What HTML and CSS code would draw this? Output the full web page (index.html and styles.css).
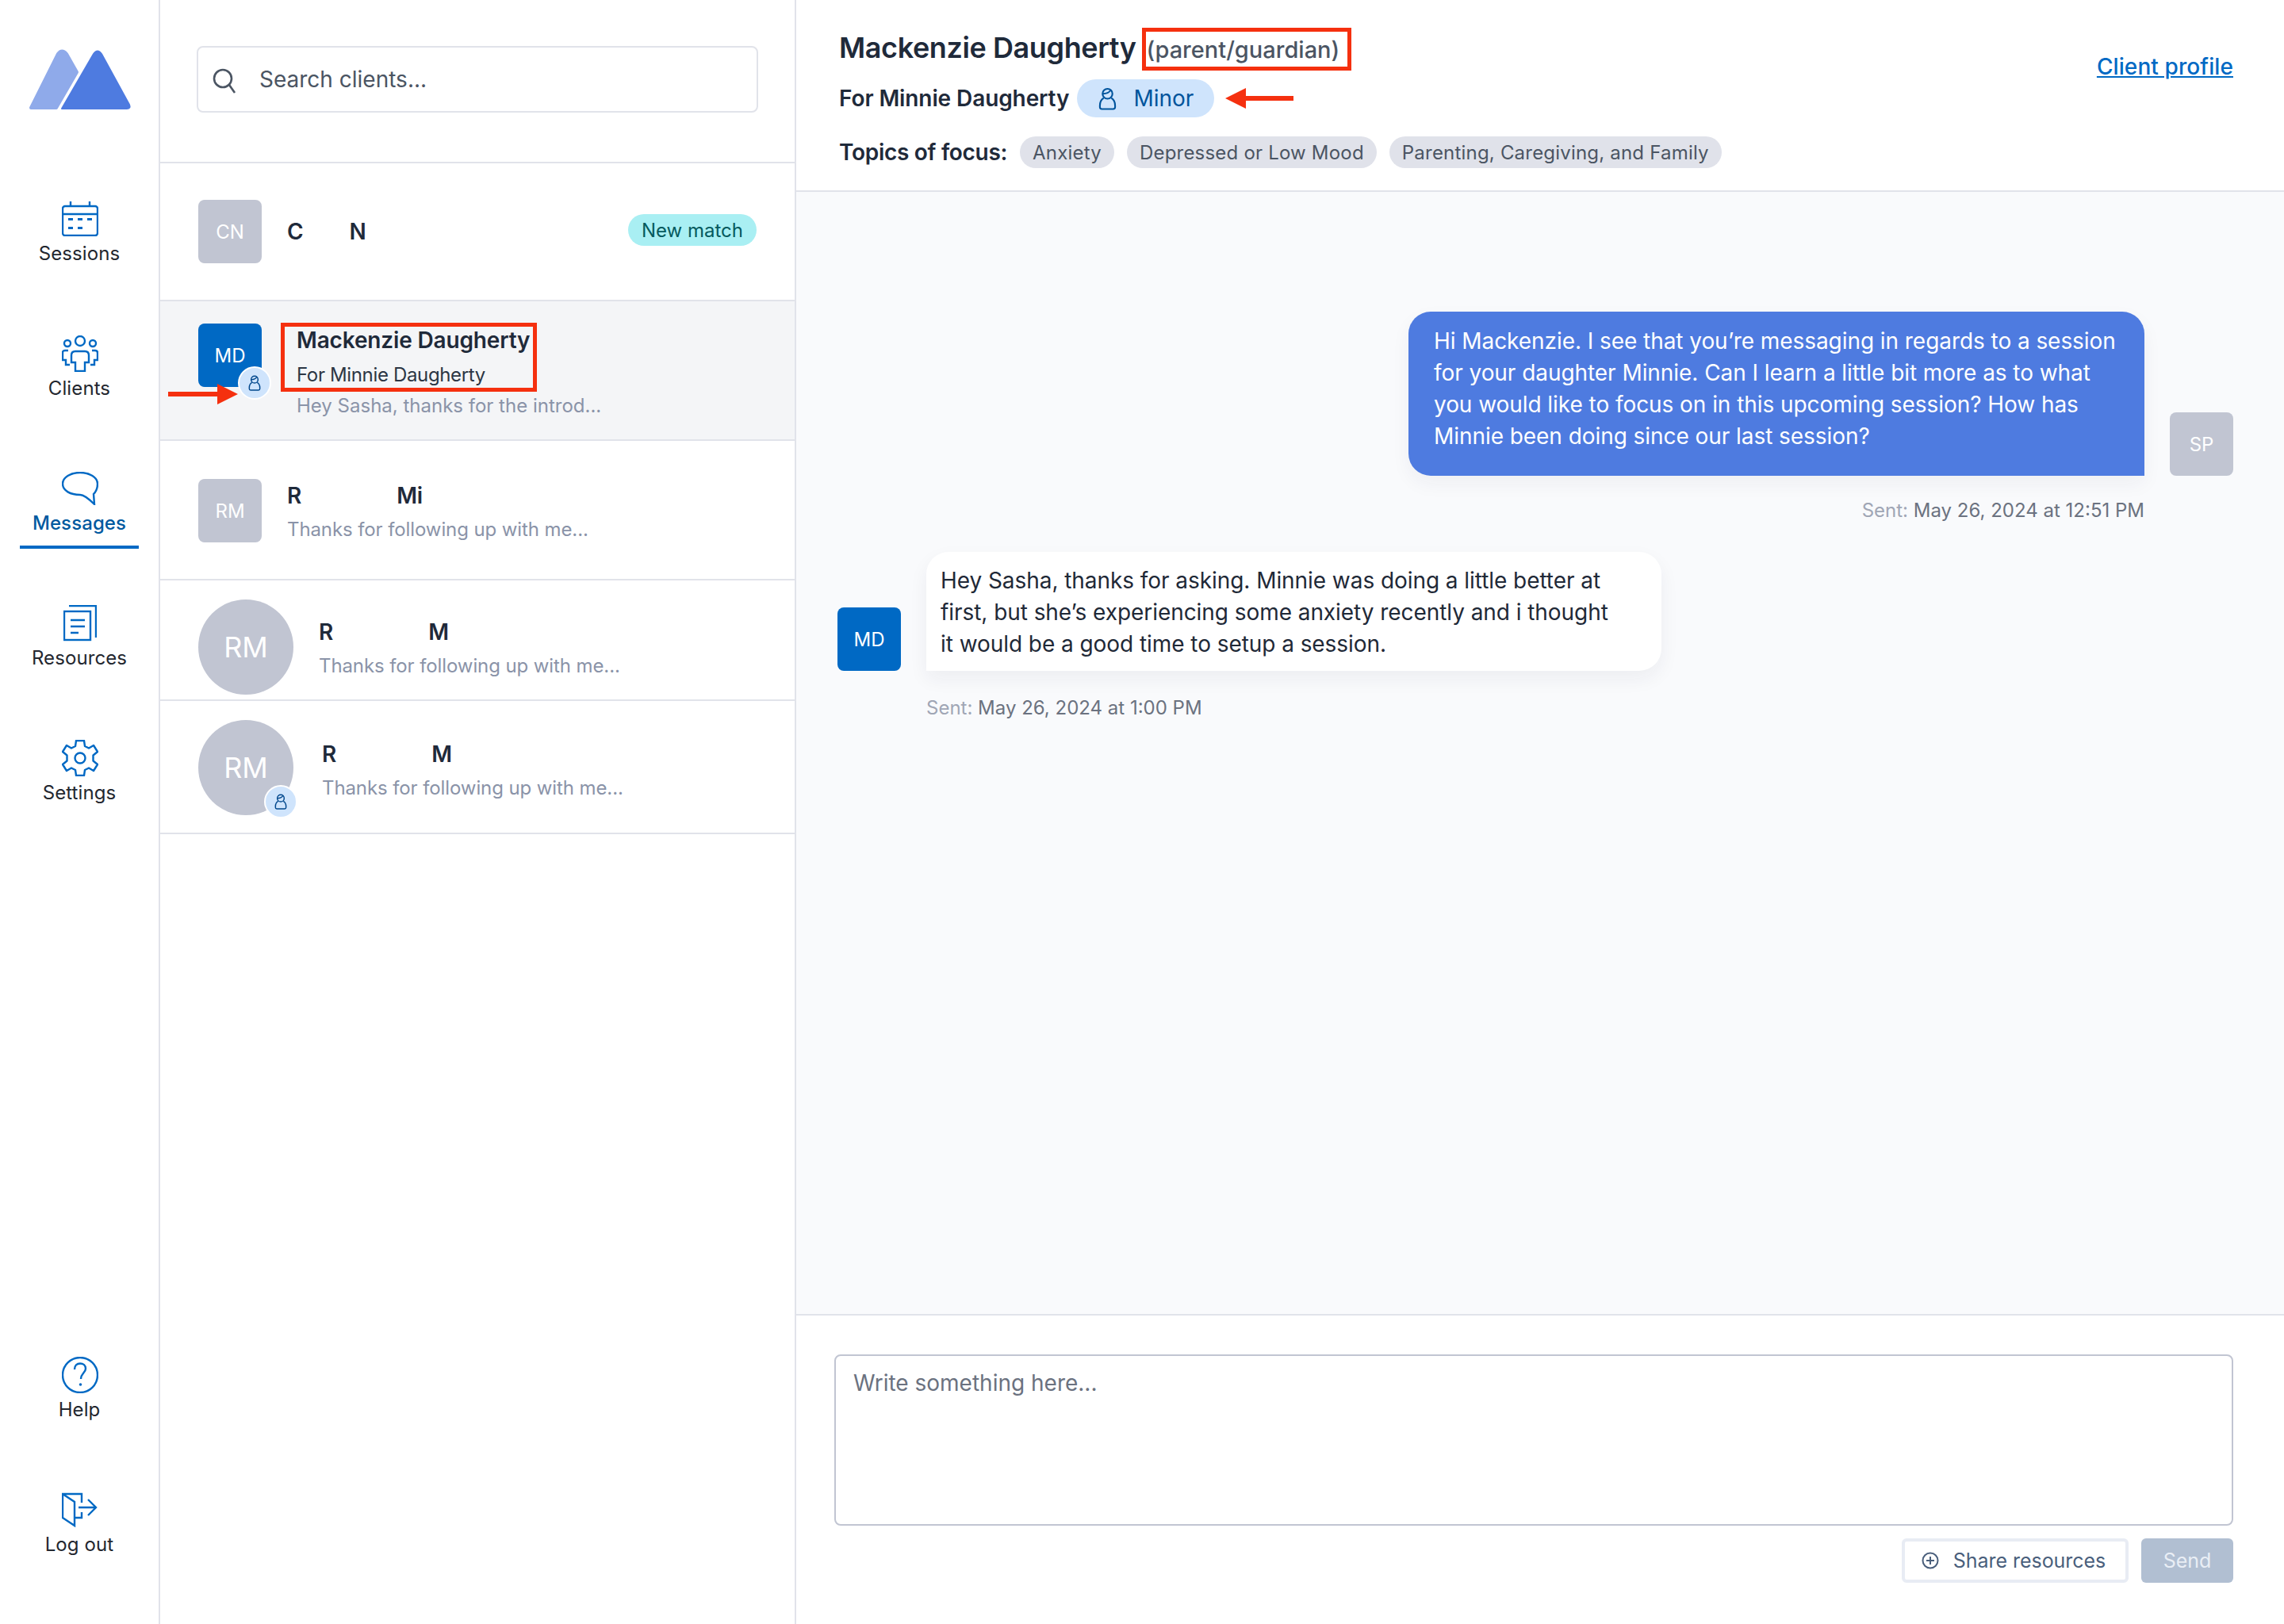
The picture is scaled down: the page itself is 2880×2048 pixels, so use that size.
FILE: index.html
```html
<!DOCTYPE html>
<html lang="en">
<head>
<meta charset="utf-8">
<title>Messages</title>
<link rel="stylesheet" href="styles.css">
</head>
<body>
<svg class="defs" width="0" height="0" aria-hidden="true">
  <symbol id="minor" viewBox="0 0 24 30">
    <circle cx="12" cy="8.500" r="6.500" fill="none" stroke="currentColor" stroke-width="2.200"/>
    <path d="M6 8.500C9 8.500 14 7 16.500 3.500" fill="none" stroke="currentColor" stroke-width="2"/>
    <path d="M7 14C3.500 16 2 20 2 24v2q0 2.500 2.500 2.500h15q2.500 0 2.500-2.500v-2c0-4-1.500-8-5-10" fill="none" stroke="currentColor" stroke-width="2.200"/>
  </symbol>
</svg>
<div class="app">
  <nav class="nav">
    <svg class="logo" width="130" height="77" viewBox="0 0 130 77">
      <path d="M4 74L38 6Q43 -1 49 6L62 29L36 74Z" fill="#8faaea" stroke="#8faaea" stroke-width="4" stroke-linejoin="round"/>
      <path d="M43 75L83 6Q88 -1 93 6L128 70Q130 75 125 75Z" fill="#4e7be0" stroke="#4e7be0" stroke-width="2" stroke-linejoin="round"/>
    </svg>
    <div class="nav-main">
      <a class="nav-item">
        <span class="nav-icon"><svg width="46" height="44" viewBox="0 0 46 44"><rect x="1" y="6" width="44" height="37" rx="3"/><path d="M1 16H45M11 0V6M35 0V6"/><path class="fill" d="M8 21h6v3H8zM20 21h6v3h-6zM32 21h6v3h-6zM8 32h6v3H8zM20 32h6v3h-6z"/></svg></span>
        <span class="nav-label">Sessions</span>
      </a>
      <a class="nav-item">
        <span class="nav-icon"><svg width="46" height="46" viewBox="0 0 46 46"><circle cx="23" cy="7" r="6"/><circle cx="7" cy="10" r="4"/><circle cx="39" cy="10" r="4"/><path d="M17 20H29Q34 20 34 25V34H29V45H17V34H12V25Q12 20 17 20Z"/><path d="M8 19H4Q1 19 1 22V31H5V37H10M38 19H42Q45 19 45 22V31H41V37H36"/></svg></span>
        <span class="nav-label">Clients</span>
      </a>
      <a class="nav-item is-active">
        <span class="nav-icon"><svg width="46" height="42" viewBox="0 0 46 42"><path d="M23 1C11 1 1 7 1 15C1 24 11 29 23 29C26 29 30 30 41 41L40 28C42 26 45 21 45 15C45 7 35 1 23 1Z"/></svg></span>
        <span class="nav-label">Messages</span>
        <span class="nav-underline"></span>
      </a>
      <a class="nav-item">
        <span class="nav-icon"><svg width="42" height="46" viewBox="0 0 42 46"><rect x="1" y="8" width="33" height="36"/><path d="M7 1H41V41M9 19H27M9 27H27M9 35H19"/></svg></span>
        <span class="nav-label">Resources</span>
      </a>
      <a class="nav-item">
        <span class="nav-icon"><svg width="46" height="46" viewBox="0 0 46 46"><circle cx="23" cy="23" r="6.500"/><path d="M18 1H28L29 8L34 10.500L40 7L45 15L39.500 19.500V26.500L45 31L40 39L34 35.500L29 38L28 45H18L17 38L12 35.500L6 39L1 31L6.500 26.500V19.500L1 15L6 7L12 10.500L17 8Z" stroke-linejoin="round"/></svg></span>
        <span class="nav-label">Settings</span>
      </a>
    </div>
    <div class="nav-bottom">
      <a class="nav-item">
        <span class="nav-icon"><svg width="46" height="46" viewBox="0 0 46 46"><circle cx="23" cy="23" r="22"/><path d="M16 16C16 11 19 8.500 23 8.500C27 8.500 30 11 30 15C30 20 24 21 24 28"/><circle class="fill" cx="23.500" cy="35" r="1.800"/></svg></span>
        <span class="nav-label">Help</span>
      </a>
      <a class="nav-item">
        <span class="nav-icon"><svg width="46" height="44" viewBox="0 0 46 44"><path d="M1 2V32L16 42V12L1 2H25V13M25 25V32H16M21 19H43M33 9L43 19L33 29"/></svg></span>
        <span class="nav-label">Log out</span>
      </a>
    </div>
  </nav>

  <aside class="list">
    <div class="search-wrap">
      <div class="search">
        <svg width="32" height="32" viewBox="0 0 32 32" class="search-icon"><circle cx="14" cy="13" r="11"/><path d="M22 21L29 31"/></svg>
        <span>Search clients...</span>
      </div>
    </div>

    <div class="row row-1">
      <div class="avatar square grey">CN</div>
      <div class="row-text row-text-1">
        <div class="name"><span>C</span><span class="gap-c">N</span></div>
      </div>
      <span class="new-match">New match</span>
    </div>

    <div class="row row-2 selected">
      <div class="avatar square blue">MD
        <span class="badge"><svg width="16" height="20"><use href="#minor"/></svg></span>
      </div>
      <div class="row-text row-text-2">
        <div class="name name-sub-gap">Mackenzie Daugherty</div>
        <div class="sub">For Minnie Daugherty</div>
        <div class="preview">Hey Sasha, thanks for the introd...</div>
      </div>
      <div class="red-box row-box"></div>
      <svg class="row-arrow" width="90" height="26" viewBox="0 0 90 26"><path d="M0 10H62V0L88 13L62 26V16H0Z" fill="#f5300f"/></svg>
    </div>

    <div class="row row-3">
      <div class="avatar square grey small-text">RM</div>
      <div class="row-text row-text-3">
        <div class="name"><span>R</span><span class="gap-r">Mi</span></div>
        <div class="preview tight">Thanks for following up with me...</div>
      </div>
    </div>

    <div class="row row-4">
      <div class="avatar round grey">RM</div>
      <div class="row-text row-text-4">
        <div class="name"><span>R</span><span class="gap-r">M</span></div>
        <div class="preview tight">Thanks for following up with me...</div>
      </div>
    </div>

    <div class="row row-5">
      <div class="avatar round grey">RM
        <span class="badge badge-round"><svg width="16" height="20"><use href="#minor"/></svg></span>
      </div>
      <div class="row-text row-text-5">
        <div class="name"><span>R</span><span class="gap-r">M</span></div>
        <div class="preview tight">Thanks for following up with me...</div>
      </div>
    </div>
  </aside>

  <main class="main">
    <header class="header">
      <div class="header-left">
        <div class="title-row">
          <h1 class="title">Mackenzie Daugherty</h1>
          <span class="red-box role">(parent/guardian)</span>
        </div>
        <div class="for-row">
          <span class="for">For Minnie Daugherty</span>
          <span class="minor-pill"><svg width="23" height="29"><use href="#minor"/></svg>Minor</span>
          <svg class="pill-arrow" width="86" height="26" viewBox="0 0 86 26"><path d="M86 10H26V0L0 13L26 26V16H86Z" fill="#f5300f"/></svg>
        </div>
        <div class="topics-row">
          <span class="topics-label">Topics of focus:</span>
          <span class="chip">Anxiety</span>
          <span class="chip">Depressed or Low Mood</span>
          <span class="chip">Parenting, Caregiving, and Family</span>
        </div>
      </div>
      <a class="profile-link">Client profile</a>
    </header>

    <section class="thread">
      <div class="msg msg-out">
        <div class="bubble bubble-out">Hi Mackenzie. I see that you’re messaging in regards to a session for your daughter Minnie. Can I learn a little bit more as to what you would like to focus on in this upcoming session? How has Minnie been doing since our last session?</div>
        <div class="avatar square grey small-text">SP</div>
      </div>
      <div class="meta meta-out"><span class="meta-key">Sent:</span> May 26, 2024 at 12:51 PM</div>
      <div class="msg msg-in">
        <div class="avatar square blue small-text">MD</div>
        <div class="bubble bubble-in">Hey Sasha, thanks for asking. Minnie was doing a little better at first, but she’s experiencing some anxiety recently and i thought it would be a good time to setup a session.</div>
      </div>
      <div class="meta meta-in"><span class="meta-key">Sent:</span> May 26, 2024 at 1:00 PM</div>
    </section>

    <footer class="composer">
      <div class="textarea">Write something here...</div>
      <div class="actions">
        <button class="btn btn-share"><svg width="22" height="22" viewBox="0 0 22 22"><circle cx="11" cy="11" r="9.500"/><path d="M11 6V16M6 11H16"/></svg>Share resources</button>
        <button class="btn btn-send">Send</button>
      </div>
    </footer>
  </main>
</div>
</body>
</html>
```
FILE: styles.css
```css
* { box-sizing: border-box; }
html, body { margin: 0; padding: 0; }
body { font-family: "Inter", "Liberation Sans", sans-serif; color: #1f2937; background: #fff; }
.defs { position: absolute; }
.app { display: flex; width: 2880px; height: 2048px; overflow: hidden; }

/* left navigation */
.nav { width: 202px; flex: none; border-right: 2px solid #e1e3ea; display: flex; flex-direction: column; align-items: center; padding: 62px 0 49px; }
.logo { display: block; flex: none; margin-bottom: 112px; }
.nav-main, .nav-bottom { display: flex; flex-direction: column; gap: 50px; width: 100%; }
.nav-bottom { margin-top: auto; }
.nav-item { height: 120px; display: flex; flex-direction: column; align-items: center; }
.nav-icon { height: 50px; margin-left: 2px; display: flex; align-items: center; justify-content: center; }
.nav-icon svg { fill: none; stroke: #0069c4; stroke-width: 2.400; display: block; }
.nav-icon svg .fill { fill: #0069c4; stroke: none; }
.nav-label { margin-top: 4px; font-size: 24px; line-height: 30px; color: #23272f; letter-spacing: 0.1px; }
.is-active .nav-label { color: #00599f; font-weight: 500; }
.nav-underline { margin-top: 13px; width: 150px; height: 4px; background: #0069c4; }

/* client list */
.list { width: 802px; flex: none; border-right: 2px solid #e1e3ea; }
.search-wrap { height: 206px; border-bottom: 2px solid #e1e3ea; padding: 58px 46px 0 46px; }
.search { height: 84px; width: 708px; border: 2px solid #e1e3ea; border-radius: 8px; display: flex; align-items: center; padding-left: 17px; gap: 28px; font-size: 28px; color: #4b5563; }
.search-icon { fill: none; stroke: #4b5563; stroke-width: 2.600; margin-top: 3px; }
.row { position: relative; display: flex; align-items: flex-start; padding-left: 48px; border-bottom: 2px solid #e1e3ea; }
.row-1 { height: 174px; padding-top: 46px; }
.row-2 { height: 176px; padding-top: 28px; }
.row-3 { height: 176px; padding-top: 48px; }
.row-4 { height: 152px; padding-top: 24px; }
.row-5 { height: 168px; padding-top: 24px; }
.selected { background: #f4f5f7; }
.avatar { position: relative; flex: none; display: flex; align-items: center; justify-content: center; color: #fff; }
.square { width: 80px; height: 80px; border-radius: 8px; font-size: 24px; }
.round { width: 120px; height: 120px; border-radius: 50%; font-size: 36px; }
.grey { background: #c1c5d2; }
.blue { background: #0069c4; }
.small-text { font-size: 24px; }
.badge { position: absolute; right: -12px; bottom: -16px; width: 42px; height: 42px; border-radius: 50%; border: 2px solid #fff; background: #cfe4fc; color: #00478c; display: flex; align-items: center; justify-content: center; }
.badge-round { right: -5px; bottom: -4px; }
.row-text-1 { margin: 0 0 0 32px; flex: 1; padding-top: 22px; }
.row-text-2 { margin: 3px 0 0 44px; }
.row-text-3 { margin: 3px 0 0 32px; }
.row-text-4 { margin: 23px 0 0 32px; }
.row-text-5 { margin: 25px 0 0 36px; }
.name { display: flex; font-size: 28px; line-height: 36px; font-weight: 600; color: #1f2a3a; letter-spacing: -0.15px; margin-bottom: 7px; white-space: nowrap; }
.row-text-1 .name { margin-bottom: 0; }
.name-sub-gap { margin-bottom: 8px; }
.gap-c { margin-left: 58px; }
.gap-r { margin-left: 120px; }
.sub { font-size: 24px; line-height: 36px; color: #2c3644; letter-spacing: -0.35px; margin-bottom: 3px; white-space: nowrap; }
.preview { font-size: 24px; line-height: 36px; color: #8a93a8; white-space: nowrap; }
.tight { letter-spacing: -0.1px; }
.new-match { height: 40px; width: 162px; margin: 18px 48px 0 0; border-radius: 20px; background: #a9eff3; color: #055a5e; font-size: 24px; display: flex; align-items: center; justify-content: center; }
.red-box { border: 5px solid #f5300f; }
.row-box { position: absolute; left: 152px; top: 27px; width: 323px; height: 87px; }
.row-arrow { position: absolute; left: 10px; top: 104px; }

/* main pane */
.main { flex: 1; min-width: 0; display: flex; flex-direction: column; background: #f9fafc; }
.header { height: 242px; flex: none; background: #fff; border-bottom: 2px solid #e1e3ea; display: flex; justify-content: space-between; padding: 35px 64px 0 54px; }
.title-row { display: flex; align-items: center; height: 54px; gap: 7px; margin-bottom: 11px; }
.title { margin: 0 0 4px; font-size: 36px; line-height: 46px; font-weight: 600; color: #1f2a3a; letter-spacing: -0.4px; white-space: nowrap; }
.role { height: 54px; width: 264px; padding-left: 1px; display: flex; align-items: center; font-size: 29px; font-weight: 500; color: #4b5563; white-space: nowrap; }
.for-row { display: flex; align-items: center; height: 48px; margin-bottom: 24px; }
.for { font-size: 28px; font-weight: 600; color: #1f2a3a; letter-spacing: -0.1px; white-space: nowrap; }
.minor-pill { margin-left: 10px; height: 48px; width: 173px; border-radius: 24px; background: #cfe4fc; color: #00549c; font-size: 28px; display: flex; align-items: center; gap: 21px; padding-left: 27px; }
.pill-arrow { margin-left: 14px; }
.topics-row { display: flex; align-items: center; height: 40px; gap: 16px; }
.topics-label { font-size: 28px; font-weight: 600; color: #1f2a3a; letter-spacing: -0.3px; white-space: nowrap; }
.chip { height: 40px; border-radius: 20px; background: #e0e2ea; color: #4b5563; font-size: 24px; letter-spacing: 0.2px; padding: 0 16px; display: flex; align-items: center; white-space: nowrap; }
.profile-link { margin-top: 29px; height: 40px; font-size: 28px; line-height: 40px; font-weight: 500; color: #0069c4; letter-spacing: 0.1px; text-decoration: underline; white-space: nowrap; }

.thread { flex: 1; padding: 151px 64px 0 52px; }
.msg { display: flex; align-items: flex-end; gap: 32px; }
.msg-out { justify-content: flex-end; }
.bubble { font-size: 28px; line-height: 40px; letter-spacing: -0.06px; }
.bubble-out { width: 928px; padding: 17px 32px 30px; background: #4e7be0; color: #fff; border-radius: 28px 28px 0 28px; box-shadow: 0 10px 24px rgba(30, 40, 70, 0.05); }
.bubble-in { width: 927px; height: 150px; padding: 16px 50px 14px 18px; background: #fff; color: #1f2937; border-radius: 28px 28px 28px 0; box-shadow: 0 10px 24px rgba(30, 40, 70, 0.06); }
.meta { font-size: 24px; line-height: 30px; color: #6b7280; }
.meta-key { color: #a0a6b5; }
.meta-out { text-align: right; margin: 29px 112px 37px 0; }
.meta-in { margin: 32px 0 0 112px; }

.composer { height: 391px; flex: none; background: #fff; border-top: 2px solid #e1e3ea; padding: 49px 64px 0 48px; }
.textarea { height: 216px; border: 2px solid #c1c5d2; border-radius: 8px; padding: 17px 22px; font-size: 28px; line-height: 34px; color: #6b7280; }
.actions { display: flex; justify-content: flex-end; gap: 16px; margin-top: 16px; }
.btn { height: 56px; border-radius: 6px; font-family: inherit; font-size: 25px; display: flex; align-items: center; justify-content: center; }
.btn-share { width: 286px; background: #fff; border: 4px solid #e8ecf4; color: #4a5f7c; gap: 18px; letter-spacing: -0.05px; padding-left: 2px; }
.btn-share svg { fill: none; stroke: #4a5f7c; stroke-width: 2; }
.btn-send { width: 116px; background: #b1bfd2; border: 0; color: #e9eef5; }
```
